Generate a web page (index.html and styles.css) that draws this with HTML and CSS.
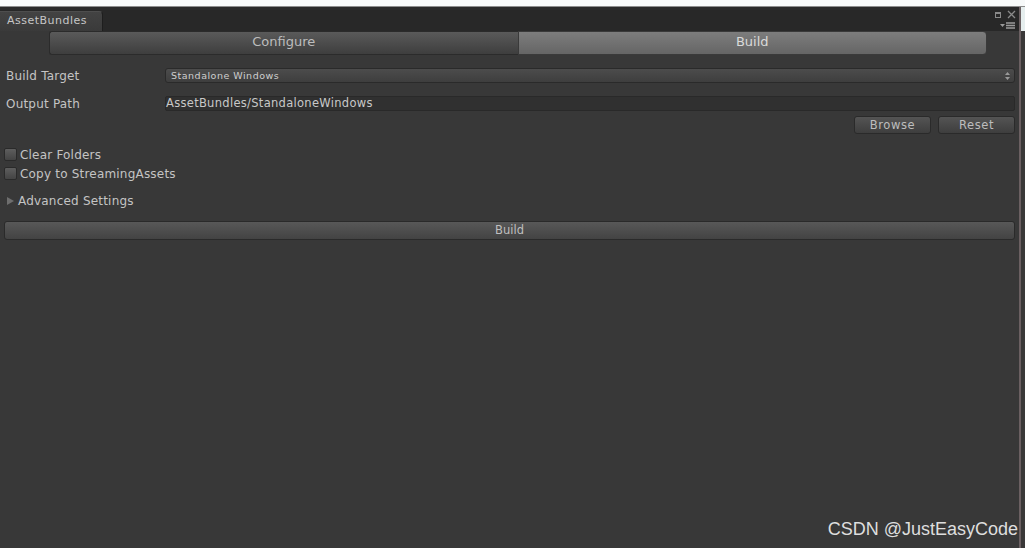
FILE: index.html
```html
<!DOCTYPE html>
<html>
<head>
<meta charset="utf-8">
<link rel="stylesheet" href="styles.css">
</head>
<body>
<div class="top-strip"></div>
<div class="frame">
  <div class="window">
    <div class="tabbar">
      <div class="tab">AssetBundles</div>
      <div class="win-icons">
        <div class="icon-row">
          <span class="restore"></span>
          <svg class="close" width="9" height="9" viewBox="0 0 9 9"><path d="M1 1L8 8M8 1L1 8" stroke="#8a8a8a" stroke-width="1.3"/></svg>
        </div>
        <svg class="menu" width="16" height="7" viewBox="0 0 16 7"><path d="M0 2h5L2.5 5z" fill="#9a9a9a"/><path d="M6 1h9M6 3.5h9M6 6h9" stroke="#9a9a9a" stroke-width="1.4"/></svg>
      </div>
    </div>
    <div class="panel">
      <div class="toolbar">
        <div class="seg seg-left">Configure</div>
        <div class="seg seg-right">Build</div>
      </div>
      <div class="field-row">
        <div class="label">Build Target</div>
        <div class="dropdown">
          <span>Standalone Windows</span>
          <svg width="5" height="8" viewBox="0 0 5 8"><path d="M2.5 0L5 3H0zM2.5 8L5 5H0z" fill="#9a9a9a"/></svg>
        </div>
      </div>
      <div class="field-row row2">
        <div class="label">Output Path</div>
        <div class="textfield">AssetBundles/StandaloneWindows</div>
      </div>
      <div class="btn-row">
        <div class="btn">Browse</div>
        <div class="btn">Reset</div>
      </div>
      <div class="check first"><span class="box"></span>Clear Folders</div>
      <div class="check"><span class="box"></span>Copy to StreamingAssets</div>
      <div class="foldout"><span class="tri"></span>Advanced Settings</div>
      <div class="build-btn">Build</div>
      <div class="spacer"></div>
      <div class="watermark">CSDN @JustEasyCode</div>
    </div>
  </div>
  <div class="edge"></div>
</div>
</body>
</html>
```

FILE: styles.css
```css
html, body {
  margin: 0;
  padding: 0;
  width: 1025px;
  height: 548px;
  overflow: hidden;
  background: #383838;
  font-family: "DejaVu Sans", "Liberation Sans", sans-serif;
}
.top-strip {
  height: 6px;
  background: #f7f9f9;
  border-bottom: 1px solid #8c8c8c;
}
.frame {
  display: flex;
  height: 541px;
}
.window {
  flex: 1;
  display: flex;
  flex-direction: column;
  border-right: 2px solid #6b6062;
}
.edge {
  width: 4px;
  background: linear-gradient(#e6eeee 0, #e6eeee 24px, #3a3838 24px);
}
.tabbar {
  height: 24px;
  background: #282828;
  display: flex;
  align-items: flex-end;
  justify-content: space-between;
  flex-shrink: 0;
}
.tab {
  width: 103px;
  height: 20px;
  padding-left: 7px;
  background: linear-gradient(#434343, #3a3a3a);
  border-top: 1px solid #4e4e4e;
  border-right: 1px solid #1e1e1e;
  border-radius: 0 4px 0 0;
  color: #c6c6c6;
  font-size: 11px;
  letter-spacing: 0.5px;
  line-height: 18px;
  box-sizing: border-box;
}
.win-icons {
  align-self: stretch;
  display: flex;
  flex-direction: column;
  align-items: flex-end;
  padding: 3px 3px 0 0;
}
.icon-row {
  display: flex;
  align-items: center;
  gap: 6px;
}
.restore {
  width: 4px;
  height: 3px;
  border: 1px solid #8a8a8a;
  border-top-width: 2px;
}
.menu {
  margin-top: 3px;
}
.panel {
  flex: 1;
  background: #383838;
  display: flex;
  flex-direction: column;
  padding: 0 4px 0 4px;
}
.toolbar {
  display: flex;
  margin: 0 28px 0 45px;
  height: 24px;
}
.seg {
  flex: 1;
  text-align: center;
  font-size: 13px;
  line-height: 20px;
  box-sizing: border-box;
}
.seg-left {
  background: linear-gradient(#5a5a5a, #3e3e3e);
  color: #bdbdbd;
  border: 1px solid #2b2b2b;
  border-right: none;
  border-radius: 3px 0 0 3px;
}
.seg-right {
  background: linear-gradient(#7d7d7d, #656565);
  color: #dadada;
  border: 1px solid #3a3a3a;
  border-radius: 0 4px 4px 0;
}
.field-row {
  display: flex;
  align-items: center;
  margin-top: 13px;
  height: 15px;
}
.row2 {
  margin-top: 13px;
}
.label {
  width: 159px;
  padding-left: 2px;
  color: #c4c4c4;
  font-size: 12px;
  letter-spacing: 0.2px;
}
.dropdown {
  flex: 1;
  height: 15px;
  box-sizing: border-box;
  background: linear-gradient(#4c4c4c, #3e3e3e);
  border: 1px solid #2a2a2a;
  border-radius: 3px;
  display: flex;
  align-items: center;
  justify-content: space-between;
  padding: 0 4px 0 5px;
  color: #cfcfcf;
  font-size: 9.5px;
  letter-spacing: 0.5px;
}
.textfield {
  flex: 1;
  height: 15px;
  box-sizing: border-box;
  background: #303030;
  border: 1px solid #292929;
  border-radius: 2px;
  color: #c8c8c8;
  font-size: 11.5px;
  letter-spacing: 0.3px;
  line-height: 13px;
  padding-left: 0;
}
.btn-row {
  display: flex;
  justify-content: flex-end;
  gap: 7px;
  margin-top: 5px;
}
.btn {
  width: 77px;
  height: 18px;
  box-sizing: border-box;
  background: linear-gradient(#545454, #3e3e3e);
  border: 1px solid #2a2a2a;
  border-radius: 3px;
  color: #bdbdbd;
  font-size: 11.5px;
  line-height: 16px;
  text-align: center;
  letter-spacing: 0.6px;
}
.check {
  display: flex;
  align-items: center;
  color: #c4c4c4;
  font-size: 12px;
  letter-spacing: 0.2px;
  height: 13px;
  margin-top: 6px;
}
.check.first {
  margin-top: 14px;
}
.box {
  width: 13px;
  height: 13px;
  box-sizing: border-box;
  background: linear-gradient(#5e5e5e, #444);
  border: 1px solid #2a2a2a;
  border-radius: 2px;
  margin-right: 3px;
}
.foldout {
  display: flex;
  align-items: center;
  color: #c4c4c4;
  font-size: 12px;
  letter-spacing: 0.2px;
  height: 14px;
  margin-top: 14px;
}
.tri {
  width: 0;
  height: 0;
  border-left: 7px solid #6e6e6e;
  border-top: 4.5px solid transparent;
  border-bottom: 4.5px solid transparent;
  margin: 0 4px 0 3px;
}
.build-btn {
  margin-top: 13px;
  height: 19px;
  box-sizing: border-box;
  background: linear-gradient(#585858, #434343);
  border: 1px solid #2a2a2a;
  border-radius: 3px;
  color: #bfbfbf;
  font-size: 11.5px;
  line-height: 17px;
  text-align: center;
}
.spacer {
  flex: 1;
}
.watermark {
  align-self: flex-end;
  color: #dedede;
  font-family: "Liberation Sans", Arial, sans-serif;
  font-size: 18px;
  margin-bottom: 8px;
  margin-right: -3px;
}
```
